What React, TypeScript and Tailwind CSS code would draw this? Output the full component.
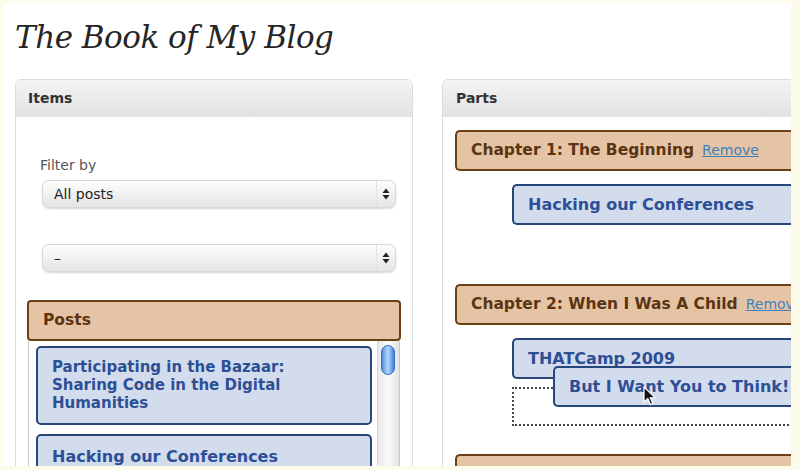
const sans = "font-['DejaVu_Sans',_'Liberation_Sans',_sans-serif]";

const Updown = () => (
  <svg width="8" height="12" viewBox="0 0 8 12">
    <path d="M4 0.5 L7.5 5 H0.5 Z" fill="#222" />
    <path d="M4 11.5 L7.5 7 H0.5 Z" fill="#222" />
  </svg>
);

const SelectBox = ({ label }: { label: string }) => (
  <div className="flex h-[28px] w-[354px] items-center rounded-[7px] border border-[#d8d8d8] bg-gradient-to-b from-[#fdfdfd] via-[#f1f1f1] to-[#e4e4e4] shadow-[0_1px_2px_rgba(0,0,0,0.15)]">
    <span className="flex-1 pl-[11px] text-[14px] text-[#222]">{label}</span>
    <span className="flex h-full w-[19px] items-center justify-center border-l border-[#e2e2e2]">
      <Updown />
    </span>
  </div>
);

const Chapter = ({ title }: { title: string }) => (
  <div className="flex h-[41px] w-[420px] items-center gap-[8px] rounded-l-[5px] border-2 border-r-0 border-[#6b4016] bg-[#e5c4a6] pl-[14px]">
    <span className="text-[15.5px] font-bold text-[#5b3512]">{title}</span>
    <span className="text-[14px] text-[#3f7fbd] underline">Remove</span>
  </div>
);

const PartPost = ({ title, className = "" }: { title: string; className?: string }) => (
  <div
    className={`flex h-[41px] w-[320px] items-center rounded-l-[5px] border-2 border-r-0 border-[#27467a] bg-[#d3dcec] pl-[14px] text-[16px] font-bold text-[#2d4f96] ${className}`}
  >
    {title}
  </div>
);

const Cursor = () => (
  <svg width="14" height="21" viewBox="0 0 14 21" className="absolute left-[90px] top-[20px]">
    <path d="M1 1 V16 L4.8 12.6 L7.4 18.6 L9.8 17.5 L7.3 11.8 H12.3 Z" fill="#111" stroke="#fff" strokeWidth="1.2" />
  </svg>
);

const App = () => {
  return (
    <div className="h-[470px] w-[800px] overflow-hidden bg-[#fdfcea] pl-[4px] pt-[3px]">
      <div className={`h-[463px] w-[787px] overflow-hidden bg-white ${sans}`}>
        <h1 className="ml-[11px] mt-[13px] h-[43px] font-['DejaVu_Serif',_serif] text-[31px] italic leading-[43px] tracking-[-0.5px] text-[#262626]">
          The Book of My Blog
        </h1>
        <div className="ml-[11px] mt-[20px] flex gap-[29px]">
          {/* Items */}
          <div className="h-[400px] w-[398px] shrink-0 rounded-t-[6px] border border-[#dcdcdc]">
            <div className="flex h-[37px] items-center rounded-t-[6px] bg-gradient-to-b from-[#f4f4f4] to-[#e2e2e2] pl-[12px] text-[14px] font-bold text-[#333]">
              Items
            </div>
            <div className="flex flex-col pl-[26px] pt-[39px]">
              <div className="mb-[6px] ml-[-2px] text-[14px] leading-[18px] text-[#555]">Filter by</div>
              <SelectBox label="All posts" />
              <div className="mt-[36px]">
                <SelectBox label="–" />
              </div>
            </div>
            <div className="ml-[11px] mt-[28px] w-[374px]">
              <div className="flex h-[41px] items-center rounded-[4px] border-2 border-[#6b4016] bg-[#e5c4a6] pl-[14px] text-[15.5px] font-bold text-[#5b3512]">
                Posts
              </div>
              <div className="mx-[1px] flex h-[200px] border-x border-[#c8c8c8]">
                <div className="flex flex-1 flex-col gap-[9px] pl-[7px] pr-[5px] pt-[5px]">
                  <div className="rounded-[5px] border-2 border-[#27467a] bg-[#d3dcec] px-[14px] pb-[11px] pt-[10px] text-[15px] font-bold leading-[18px] text-[#2d4f96]">
                    Participating in the Bazaar:
                    <br />
                    Sharing Code in the Digital
                    <br />
                    Humanities
                  </div>
                  <div className="h-[41px] rounded-[5px] border-2 border-[#27467a] bg-[#d3dcec] px-[14px] pt-[9px] text-[16px] font-bold text-[#2d4f96]">
                    Hacking our Conferences
                  </div>
                </div>
                <div className="w-[22px] border-l border-[#d6d6d6] bg-gradient-to-r from-[#e9e9e9] via-[#fafafa] to-[#e3e3e3] pl-[3px] pt-[4px]">
                  <div className="h-[30px] w-[14px] rounded-full border border-[#2f6fc4] bg-gradient-to-r from-[#4f8fe0] via-[#b6d8ff] to-[#3d7fd6]" />
                </div>
              </div>
            </div>
          </div>

          {/* Parts */}
          <div className="h-[400px] w-[360px] shrink-0 rounded-tl-[6px] border-l border-t border-[#dcdcdc]">
            <div className="flex h-[37px] items-center rounded-tl-[6px] bg-gradient-to-b from-[#f4f4f4] to-[#e2e2e2] pl-[13px] text-[14px] font-bold text-[#333]">
              Parts
            </div>
            <div className="flex flex-col pl-[12px] pt-[13px]">
              <Chapter title="Chapter 1: The Beginning" />
              <PartPost title="Hacking our Conferences" className="ml-[57px] mt-[13px]" />
              <div className="mt-[59px]">
                <Chapter title="Chapter 2: When I Was A Child" />
              </div>
              <div className="relative ml-[57px] mt-[13px]">
                <PartPost title="THATCamp 2009" className="h-[40px]" />
                <div className="mt-[8px] h-[39px] w-[320px] border-2 border-r-0 border-dotted border-[#444]" />
                <div className="absolute left-[41px] top-[28px] h-[41px] w-[360px]">
                  <PartPost title="But I Want You to Think!" className="h-[41px] w-[360px]" />
                  <Cursor />
                </div>
              </div>
              <div className="mt-[28px] h-[41px] w-[420px] rounded-tl-[5px] border-l-2 border-t-2 border-[#6b4016] bg-[#e5c4a6]" />
            </div>
          </div>
        </div>
      </div>
    </div>
  );
};

export default App;
